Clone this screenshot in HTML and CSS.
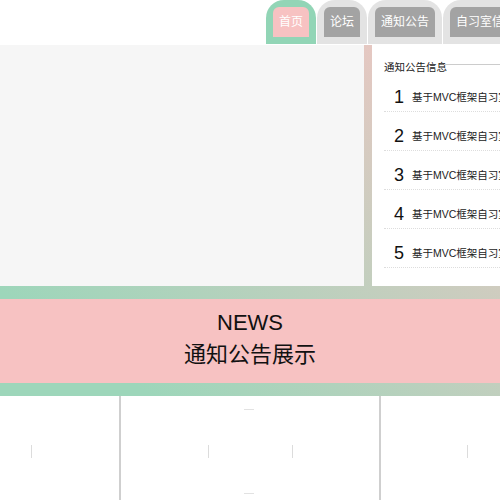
FILE: index.html
```html
<!DOCTYPE html>
<html lang="zh">
<head>
  <meta charset="UTF-8">
  <title>自习室管理系统</title>
  <meta name="viewport" content="width=device-width, initial-scale=1.0">
  <link rel="stylesheet" href="styles.css">
</head>
<body>

<header class="top">
  <nav class="tabs">
    <a href="#" class="tab active"><span>首页</span></a>
    <a href="#" class="tab"><span>论坛</span></a>
    <a href="#" class="tab"><span>通知公告</span></a>
    <a href="#" class="tab"><span>自习室信息</span></a>
  </nav>
</header>

<section class="board">
  <div class="board-row">
    <div class="banner"></div>
    <div class="notice">
      <div class="notice-title">通知公告信息</div>
      <ul class="notice-list">
        <li><b>1</b><span>基于MVC框架自习室管理系统</span></li>
        <li><b>2</b><span>基于MVC框架自习室管理系统</span></li>
        <li><b>3</b><span>基于MVC框架自习室管理系统</span></li>
        <li><b>4</b><span>基于MVC框架自习室管理系统</span></li>
        <li><b>5</b><span>基于MVC框架自习室管理系统</span></li>
      </ul>
    </div>
  </div>

  <!-- bandeau news -->
  <div class="news">
    <p>NEWS</p>
    <p>通知公告展示</p>
  </div>
</section>

<section class="cards">
  <div class="card card-a"></div>
  <div class="card card-b"></div>
  <div class="card card-c"></div>
</section>

</body>
</html>
```

FILE: styles.css
```css
:root {
  --green: #92d5b6;
  --pink: #f7c2c2;
  --grey-tab: #e3e3e3;
  --grey-in: #a3a3a3;
}

* {
  margin: 0;
  padding: 0;
  box-sizing: border-box;
}

body {
  font-family: 'Liberation Sans', 'Noto Sans CJK SC', sans-serif;
  color: #111;
  background: #fff;
  width: 500px;
  overflow: hidden;
}

/* onglets du haut */
.top {
  height: 45px;
  background: #fff;
}

.tabs {
  display: flex;
  gap: 1px;
  padding-left: 266px;
  width: max-content;
}

.tab {
  display: block;
  height: 44px;
  padding: 7px;
  border-radius: 18px 18px 0 0;
  background: var(--grey-tab);
  text-decoration: none;
}

.tab span {
  display: block;
  height: 30px;
  line-height: 30px;
  padding: 0 6px;
  border-radius: 6px 6px 0 0;
  background: var(--grey-in);
  color: #fff;
  font-size: 12px;
  white-space: nowrap;
}

.tab.active {
  background: var(--green);
}

.tab.active span {
  background: var(--pink);
}

/* zone principale */
.board {
  background: linear-gradient(to top right, #9dd6ba 15%, #f2c5c3);
  padding-bottom: 13px;
}

.board-row {
  display: flex;
  gap: 8px;
  height: 241px;
}

.banner {
  width: 364px;
  background: #f6f6f6;
}

.notice {
  flex: 1;
  background: #fff;
  padding: 14px 0 0 12px;
  overflow: hidden;
}

.notice-title {
  display: flex;
  align-items: center;
  height: 14px;
  font-size: 10.5px;
  color: #222;
  white-space: nowrap;
}

.notice-title::after {
  content: "";
  flex: 1;
  border-top: 1px solid #ccc;
  margin: 0 0 3px -3px;
}

.notice-list {
  list-style: none;
}

.notice-list li {
  display: flex;
  align-items: center;
  gap: 8px;
  height: 39px;
  padding: 17px 0 8px 10px;
  border-bottom: 1px dotted #ddd;
  white-space: nowrap;
}

.notice-list b {
  font-weight: normal;
  font-size: 18px;
  line-height: 14px;
  width: 10px;
}

.notice-list span {
  font-size: 10.5px;
  line-height: 14px;
  color: #222;
}

.news {
  margin-top: 13px;
  height: 84px;
  padding-top: 8px;
  background: var(--pink);
  text-align: center;
  font-size: 22px;
  line-height: 32px;
}

/* cartes du bas */
.cards {
  display: grid;
  grid-template-columns: 119px 258px 1fr;
  gap: 2px;
  background: #cfcfcf;
  height: 110px;
}

.card {
  background-color: #fff;
  background-repeat: no-repeat;
}

.card-a {
  background-image: linear-gradient(#dcdcdc, #dcdcdc);
  background-position: 31px 49px;
  background-size: 1px 13px;
}

.card-b {
  background-image:
    linear-gradient(#dcdcdc, #dcdcdc),
    linear-gradient(#dcdcdc, #dcdcdc),
    linear-gradient(#e2e2e2, #e2e2e2),
    linear-gradient(#e2e2e2, #e2e2e2);
  background-position: 87px 49px, 171px 49px, 123px 13px, 123px 97px;
  background-size: 1px 13px, 1px 13px, 10px 1px, 10px 1px;
}

.card-c {
  background-image: linear-gradient(#dcdcdc, #dcdcdc);
  background-position: 86px 49px;
  background-size: 1px 13px;
}
```
